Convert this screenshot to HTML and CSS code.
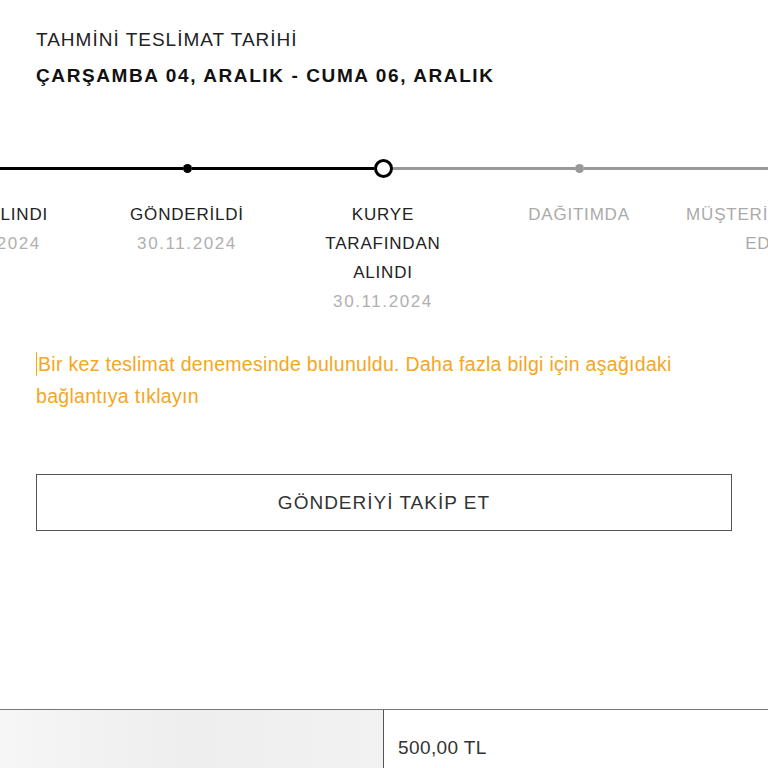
FILE: index.html
```html
<!DOCTYPE html>
<html lang="tr">
<head>
    <meta charset="UTF-8">
    <meta name="viewport" content="width=device-width, initial-scale=1.0">
    <title>Sipariş Takibi</title>
    <link rel="stylesheet" href="styles.css">
</head>
<body>

<div class="container">
    <div class="estimate">
        <div class="estimate-title">TAHMİNİ TESLİMAT TARİHİ</div>
        <div class="estimate-date">ÇARŞAMBA 04, ARALIK - CUMA 06, ARALIK</div>
    </div>

    <div class="timeline">
        <div class="step done">
            <div class="track"><span class="seg"></span><span class="dot"></span><span class="seg"></span></div>
            <div class="label">ONAY ALINDI</div>
            <div class="date">30.11.2024</div>
        </div>
        <div class="step done">
            <div class="track"><span class="seg"></span><span class="dot"></span><span class="seg"></span></div>
            <div class="label">GÖNDERİLDİ</div>
            <div class="date">30.11.2024</div>
        </div>
        <div class="step current">
            <div class="track"><span class="seg"></span><span class="dot"></span><span class="seg"></span></div>
            <div class="label">KURYE TARAFINDAN ALINDI</div>
            <div class="date">30.11.2024</div>
        </div>
        <div class="step">
            <div class="track"><span class="seg"></span><span class="dot"></span><span class="seg"></span></div>
            <div class="label">DAĞITIMDA</div>
        </div>
        <div class="step">
            <div class="track"><span class="seg"></span><span class="dot"></span><span class="seg"></span></div>
            <div class="label">MÜŞTERİYE TESLİM EDİLDİ</div>
        </div>
    </div>

    <p class="notice"><span class="caret"></span>Bir kez teslimat denemesinde bulunuldu. Daha fazla bilgi için aşağıdaki bağlantıya tıklayın</p>

    <button class="track-button">GÖNDERİYİ TAKİP ET</button>
</div>

<div class="summary">
    <div class="summary-thumb"></div>
    <div class="summary-price">500,00 TL</div>
</div>

</body>
</html>
```

FILE: styles.css
```css
html, body {
    margin: 0;
    padding: 0;
    overflow: hidden;
    background-color: #fff;
}
body {
    font-family: "Liberation Sans", Arial, sans-serif;
    color: #222;
}
.container {
    padding: 22px 36px 0;
}
.estimate-title,
.estimate-date {
    font-size: 19px;
    line-height: 36px;
    letter-spacing: 1px;
}
.estimate-date {
    font-weight: bold;
    letter-spacing: 1.6px;
    color: #111;
}

/* progress bar with its labels */
.timeline {
    display: flex;
    width: max-content;
    margin: 64px 0 0 -143px;
}
.step {
    width: 196px;
    display: flex;
    flex-direction: column;
    align-items: center;
    text-align: center;
}
.track {
    width: 100%;
    height: 20px;
    display: flex;
    align-items: center;
}
.seg {
    flex: 1;
    height: 3px;
    background-color: #999;
}
.dot {
    width: 9px;
    height: 9px;
    border-radius: 50%;
    background-color: #999;
}
.done .seg,
.done .dot,
.current .seg:first-child {
    background-color: #000;
}
.current .dot {
    width: 13px;
    height: 13px;
    border: 3px solid #000;
    background-color: #fff;
}
.label {
    width: 179px;
    margin-top: 22px;
    font-size: 17px;
    line-height: 29px;
    letter-spacing: 0.8px;
    color: #222;
}
.step:not(.done):not(.current) .label {
    color: #aaa;
}
.date {
    font-size: 17px;
    line-height: 29px;
    letter-spacing: 1.6px;
    color: #b0b0b0;
}

.notice {
    margin: 32px 0 0;
    font-size: 19.5px;
    line-height: 32px;
    letter-spacing: 0.3px;
    color: #f5a623;
}
.caret {
    display: inline-block;
    width: 1px;
    height: 24px;
    margin-right: 1px;
    vertical-align: -5px;
    background-color: #f5a623;
}

.track-button {
    display: block;
    width: 100%;
    height: 57px;
    margin-top: 62px;
    border: 1px solid #555;
    background-color: #fff;
    font-family: inherit;
    font-size: 19px;
    letter-spacing: 1px;
    color: #333;
    cursor: pointer;
}

.summary {
    display: flex;
    margin-top: 178px;
    border-top: 1px solid #777;
    height: 80px;
}
.summary-thumb {
    width: 383px;
    border-right: 1px solid #555;
    background: linear-gradient(90deg, #f7f6f7, #efeeef 50%, #f3f2f3);
}
.summary-price {
    padding: 27px 0 0 14px;
    font-size: 19px;
    letter-spacing: 0.4px;
    color: #333;
}
```
